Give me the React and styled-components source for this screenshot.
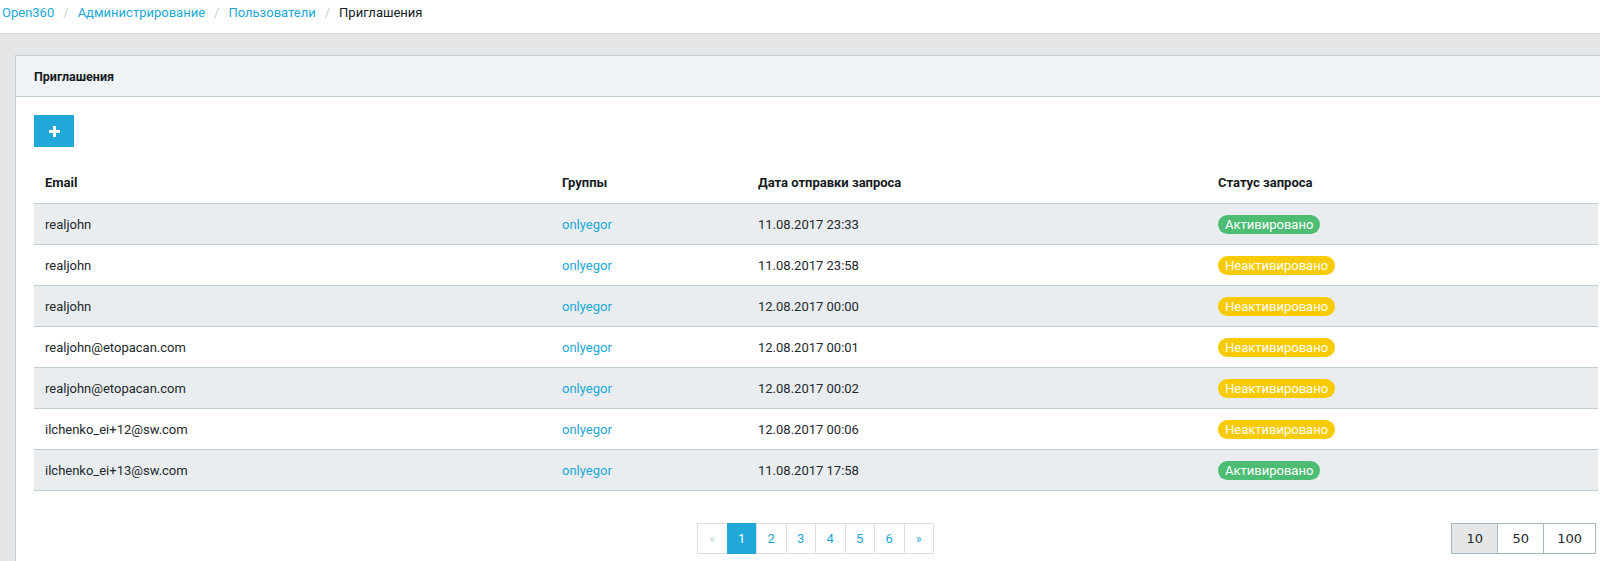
import React from 'react'
import styled, { createGlobalStyle } from 'styled-components'

const GlobalStyle = createGlobalStyle`
  html, body {
    margin: 0;
    padding: 0;
    background: #e4e5e6;
    font-family: Roboto, "Liberation Sans", sans-serif;
    font-size: 13px;
    color: #151b1e;
    overflow: hidden;
  }
`

const Page = styled.div`
  width: 1600px;
  height: 561px;
  overflow: hidden;
`

const Breadcrumb = styled.ol`
  display: flex;
  align-items: flex-start;
  list-style: none;
  margin: 0;
  padding: 4px 0 0 2px;
  box-sizing: border-box;
  height: 34px;
  background: #fff;
  border-bottom: 1px solid #d4d8db;
`

const Crumb = styled.li`
  color: ${(p) => (p.active ? '#151b1e' : '#20a8d8')};
  line-height: 18px;

  &:not(:first-child)::before {
    content: '/';
    color: #c2cfd6;
    padding: 0 9px;
  }
`

const Main = styled.div`
  padding: 21px 0 0 15px;
`

const Card = styled.div`
  width: 1603px;
  background: #fff;
  border: 1px solid #c2cfd6;
  border-right: none;
  padding-bottom: 40px;
`

const CardHeader = styled.div`
  height: 40px;
  display: flex;
  align-items: center;
  padding: 0 18px;
  background: #f0f3f5;
  border-bottom: 1px solid #c2cfd6;
  font-weight: 700;
  font-size: 12.5px;
  color: #151b1e;
`

const CardBody = styled.div`
  padding: 18px 0 0 18px;
  width: 1564px;
`

const AddButton = styled.button`
  width: 40px;
  height: 32px;
  border: none;
  padding: 0;
  background: #20a8d8;
  display: flex;
  align-items: center;
  justify-content: center;
  cursor: pointer;
`

const Table = styled.table`
  width: 100%;
  margin-top: 12px;
  border-collapse: collapse;
  table-layout: fixed;
`

const Th = styled.th`
  text-align: left;
  font-weight: 700;
  height: 41px;
  padding: 3px 11px 0;
  border-bottom: 1px solid #c2cfd6;
  vertical-align: middle;
`

const Row = styled.tr`
  background: ${(p) => (p.striped ? '#e9edf0' : '#fff')};
`

const Td = styled.td`
  height: 40px;
  padding: 0 11px;
  border-bottom: 1px solid #c2cfd6;
  vertical-align: middle;
  color: #23282c;
`

const Link = styled.a`
  color: #20a8d8;
  text-decoration: none;
`

const Badge = styled.span`
  display: inline-block;
  height: 19px;
  line-height: 19px;
  padding: 0 7px;
  border-radius: 10px;
  color: #fff;
  font-size: 13px;
  background: ${(p) => (p.active ? '#4dbd74' : '#f8cb00')};
`

const Footer = styled.div`
  display: grid;
  grid-template-columns: 1fr auto 1fr;
  align-items: center;
  margin-top: 32px;
`

const Pagination = styled.ul`
  grid-column: 2;
  display: flex;
  list-style: none;
  margin: 0;
  padding: 0;
`

const PageItem = styled.li`
  width: 30.5px;
  height: 31px;
  box-sizing: border-box;
  display: flex;
  align-items: center;
  justify-content: center;
  border: 1px solid #ddd;
  margin-left: -1px;
  background: ${(p) => (p.active ? '#20a8d8' : '#fff')};
  border-color: ${(p) => (p.active ? '#20a8d8' : '#ddd')};
  color: ${(p) => (p.active ? '#fff' : p.disabled ? '#c2cfd6' : '#20a8d8')};
  font-size: ${(p) => (p.arrow ? '12px' : '13px')};
`

const SizeGroup = styled.div`
  grid-column: 3;
  justify-self: end;
  display: flex;
  margin-right: 2px;
`

const SizeButton = styled.button`
  height: 31px;
  padding: 0 13px;
  margin-left: -1px;
  border: 1px solid #a4b7c1;
  background: ${(p) => (p.active ? '#e6e6e6' : '#fff')};
  font-family: "DejaVu Sans", Verdana, sans-serif;
  font-size: 13px;
  color: #23282c;
  min-width: 47px;
`

const rows = [
  { email: 'realjohn', date: '11.08.2017 23:33', active: true },
  { email: 'realjohn', date: '11.08.2017 23:58', active: false },
  { email: 'realjohn', date: '12.08.2017 00:00', active: false },
  { email: 'realjohn@etopacan.com', date: '12.08.2017 00:01', active: false },
  { email: 'realjohn@etopacan.com', date: '12.08.2017 00:02', active: false },
  { email: 'ilchenko_ei+12@sw.com', date: '12.08.2017 00:06', active: false },
  { email: 'ilchenko_ei+13@sw.com', date: '11.08.2017 17:58', active: true },
]

const PlusIcon = () => (
  <svg width="11" height="11" viewBox="0 0 11 11">
    <path d="M4 0h3v4h4v3H7v4H4V7H0V4h4z" fill="#fff" />
  </svg>
)

export default function App() {
  return (
    <Page>
      <GlobalStyle />
      <Breadcrumb>
        <Crumb>Open360</Crumb>
        <Crumb>Администрирование</Crumb>
        <Crumb>Пользователи</Crumb>
        <Crumb active>Приглашения</Crumb>
      </Breadcrumb>
      <Main>
        <Card>
          <CardHeader>Приглашения</CardHeader>
          <CardBody>
            <AddButton>
              <PlusIcon />
            </AddButton>
            <Table>
              <colgroup>
                <col style={{ width: 517 }} />
                <col style={{ width: 196 }} />
                <col style={{ width: 460 }} />
                <col />
              </colgroup>
              <thead>
                <tr>
                  <Th>Email</Th>
                  <Th>Группы</Th>
                  <Th>Дата отправки запроса</Th>
                  <Th>Статус запроса</Th>
                </tr>
              </thead>
              <tbody>
                {rows.map((r, i) => (
                  <Row key={i} striped={i % 2 === 0}>
                    <Td>{r.email}</Td>
                    <Td>
                      <Link>onlyegor</Link>
                    </Td>
                    <Td>{r.date}</Td>
                    <Td>
                      <Badge active={r.active}>
                        {r.active ? 'Активировано' : 'Неактивировано'}
                      </Badge>
                    </Td>
                  </Row>
                ))}
              </tbody>
            </Table>
            <Footer>
              <Pagination>
                <PageItem arrow disabled>«</PageItem>
                <PageItem active>1</PageItem>
                <PageItem>2</PageItem>
                <PageItem>3</PageItem>
                <PageItem>4</PageItem>
                <PageItem>5</PageItem>
                <PageItem>6</PageItem>
                <PageItem arrow>»</PageItem>
              </Pagination>
              <SizeGroup>
                <SizeButton active>10</SizeButton>
                <SizeButton>50</SizeButton>
                <SizeButton>100</SizeButton>
              </SizeGroup>
            </Footer>
          </CardBody>
        </Card>
      </Main>
    </Page>
  )
}
